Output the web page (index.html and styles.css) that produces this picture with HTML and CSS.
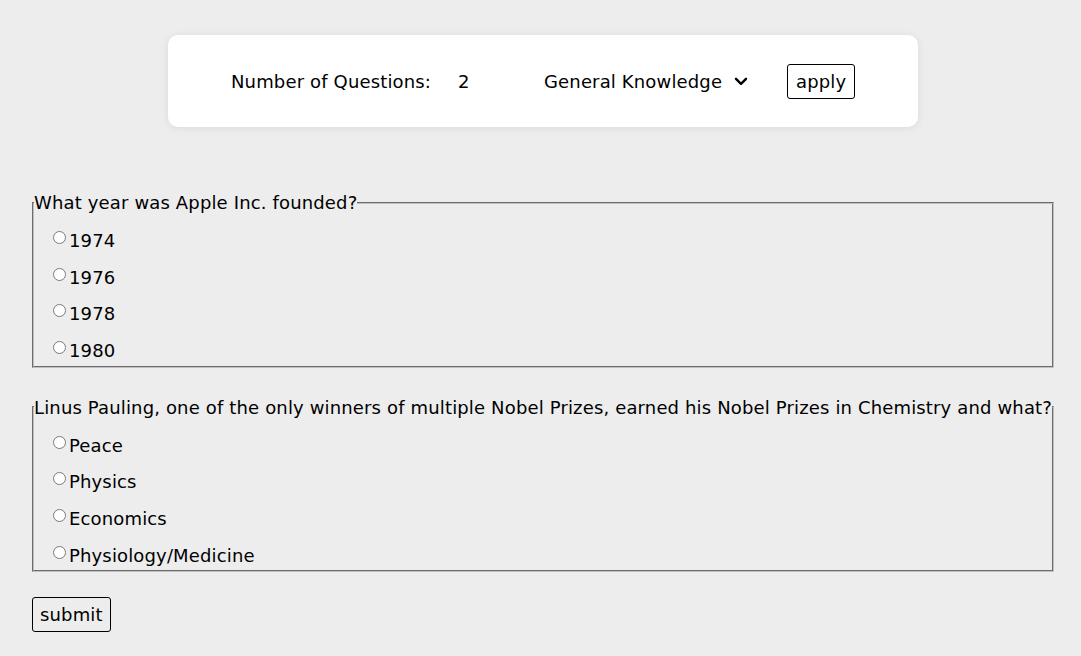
FILE: index.html
```html
<!DOCTYPE html>
<html lang="en">
<head>
<meta charset="utf-8">
<title>Quiz</title>
<link rel="stylesheet" href="styles.css">
</head>
<body>
<div class="settings">
  <label class="count-label" for="count">Number of Questions:</label>
  <input class="count-input" id="count" type="text" value="2">
  <div class="category">
    <select class="category-select"><option>General Knowledge</option></select>
    <svg class="chevron" width="14" height="9" viewBox="0 0 14 9"><path d="M2 1.8 L7 6.8 L12 1.8" fill="none" stroke="#000" stroke-width="2.4" stroke-linecap="round" stroke-linejoin="round"/></svg>
  </div>
  <button class="btn apply">apply</button>
</div>

<form class="quiz">
  <fieldset class="question">
    <legend class="question-text">What year was Apple Inc. founded?</legend>
    <label class="option"><input type="radio" name="q1">1974</label>
    <label class="option"><input type="radio" name="q1">1976</label>
    <label class="option"><input type="radio" name="q1">1978</label>
    <label class="option"><input type="radio" name="q1">1980</label>
  </fieldset>
  <fieldset class="question last">
    <legend class="question-text">Linus Pauling, one of the only winners of multiple Nobel Prizes, earned his Nobel Prizes in Chemistry and what?</legend>
    <label class="option"><input type="radio" name="q2">Peace</label>
    <label class="option"><input type="radio" name="q2">Physics</label>
    <label class="option"><input type="radio" name="q2">Economics</label>
    <label class="option"><input type="radio" name="q2">Physiology/Medicine</label>
  </fieldset>
  <button class="btn submit" type="button">submit</button>
</form>
</body>
</html>
```
FILE: styles.css
```css
html, body {
  margin: 0;
  padding: 0;
}
body {
  background: #ededed;
  color: #000;
  font-family: "DejaVu Sans", sans-serif;
  font-size: 18px;
  letter-spacing: 0.15px;
  line-height: 27px;
}
.settings {
  box-sizing: border-box;
  width: 750px;
  height: 92px;
  margin: 35px 0 0 168px;
  padding-left: 63px;
  background: #fff;
  border-radius: 10px;
  box-shadow: 0 1px 8px rgba(0, 0, 0, 0.08);
  display: flex;
  align-items: center;
}
.count-label {
  width: 227px;
}
.count-input {
  width: 86px;
  padding: 0;
  border: none;
  background: transparent;
  font: inherit;
  letter-spacing: inherit;
  color: #000;
  outline: none;
}
.category {
  display: flex;
  align-items: center;
}
.category-select {
  appearance: none;
  -webkit-appearance: none;
  border: none;
  background: transparent;
  padding: 0;
  margin: 0;
  font: inherit;
  letter-spacing: inherit;
  color: #000;
  width: 183px;
}
.chevron {
  margin-left: 7px;
}
.btn {
  font: inherit;
  letter-spacing: inherit;
  line-height: 27px;
  color: #000;
  border: 1px solid #000;
  border-radius: 3px;
  padding: 3px 7px;
  margin: 0;
}
.apply {
  background: #fff;
  margin-left: 39px;
  padding: 3px 8px;
}
.quiz {
  margin: 0 27px 0 32px;
  padding-top: 62px;
}
.question {
  margin: 0 0 26px 0;
  padding: 0 0 3px 0;
  border: 2px groove rgb(192, 192, 192);
}
.question.last {
  margin-bottom: 25px;
}
.question-text {
  padding: 0;
  margin-left: 0;
}
.option {
  display: block;
  height: 24.67px;
  padding-top: 12px;
  line-height: 26.67px;
  margin-left: 14px;
}
.option input {
  appearance: none;
  -webkit-appearance: none;
  box-sizing: border-box;
  width: 13px;
  height: 13px;
  margin: 3px 3px 0 5px;
  vertical-align: top;
  border: 1px solid #7a7a7a;
  border-radius: 50%;
  background: #fff;
}
.submit {
  background: transparent;
}
```
